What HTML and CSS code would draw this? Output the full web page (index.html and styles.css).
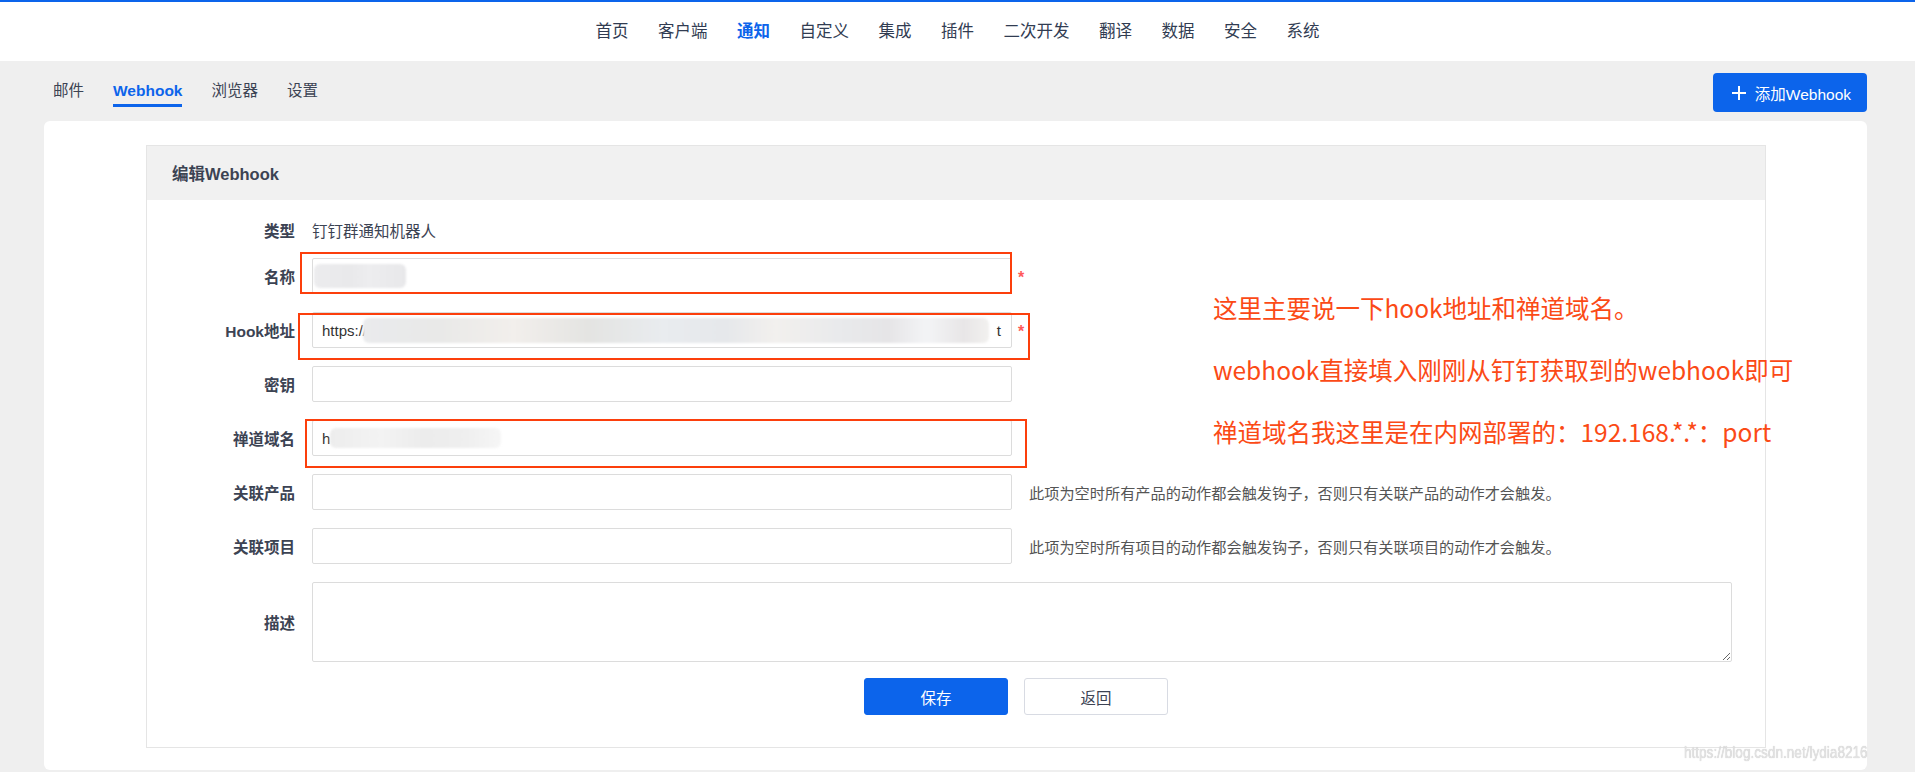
FILE: index.html
```html
<!DOCTYPE html>
<html lang="zh-CN">
<head>
<meta charset="utf-8">
<title>编辑Webhook</title>
<link rel="stylesheet" href="styles.css">
</head>
<body>
<header class="topbar">
  <nav class="mainnav">
    <a class="nav-item">首页</a>
    <a class="nav-item">客户端</a>
    <a class="nav-item active">通知</a>
    <a class="nav-item">自定义</a>
    <a class="nav-item">集成</a>
    <a class="nav-item">插件</a>
    <a class="nav-item">二次开发</a>
    <a class="nav-item">翻译</a>
    <a class="nav-item">数据</a>
    <a class="nav-item">安全</a>
    <a class="nav-item">系统</a>
  </nav>
</header>

<main class="main">
  <div class="toolbar">
    <nav class="subnav">
      <a class="sub-item">邮件</a>
      <a class="sub-item active">Webhook</a>
      <a class="sub-item">浏览器</a>
      <a class="sub-item">设置</a>
    </nav>
    <button class="btn-add">
      <svg class="plus" width="14" height="14" viewBox="0 0 14 14"><path d="M7 0v14M0 7h14" stroke="#fff" stroke-width="2"/></svg>
      <span>添加Webhook</span>
    </button>
  </div>

  <section class="card">
    <div class="panel">
      <div class="panel-head">编辑Webhook</div>
      <form class="form">
        <div class="row row-type">
          <label class="label">类型</label>
          <div class="static">钉钉群通知机器人</div>
        </div>
        <div class="row">
          <label class="label">名称</label>
          <div class="field"><span class="blur blur-name"></span></div>
          <span class="req">*</span>
        </div>
        <div class="row">
          <label class="label">Hook地址</label>
          <div class="field"><span class="val">https://</span><span class="blur blur-hook"></span><span class="val cursor">t</span></div>
          <span class="req">*</span>
        </div>
        <div class="row">
          <label class="label">密钥</label>
          <input class="field" type="text">
        </div>
        <div class="row">
          <label class="label">禅道域名</label>
          <div class="field"><span class="val">h</span><span class="blur blur-domain"></span></div>
        </div>
        <div class="row">
          <label class="label">关联产品</label>
          <input class="field" type="text">
          <span class="help">此项为空时所有产品的动作都会触发钩子，否则只有关联产品的动作才会触发。</span>
        </div>
        <div class="row">
          <label class="label">关联项目</label>
          <input class="field" type="text">
          <span class="help">此项为空时所有项目的动作都会触发钩子，否则只有关联项目的动作才会触发。</span>
        </div>
        <div class="row row-desc">
          <label class="label">描述</label>
          <textarea class="textarea"></textarea>
        </div>
        <div class="actions">
          <button type="button" class="btn btn-primary">保存</button>
          <button type="button" class="btn btn-default">返回</button>
        </div>
      </form>
    </div>
  </section>
</main>

<div class="mark mark-name"></div>
<div class="mark mark-hook"></div>
<div class="mark mark-domain"></div>

<div class="note">
  <p>这里主要说一下hook地址和禅道域名。</p>
  <p>webhook直接填入刚刚从钉钉获取到的webhook即可</p>
  <p>禅道域名我这里是在内网部署的：192.168.*.*：port</p>
</div>

<div class="watermark">https://blog.csdn.net/lydia8216</div>
</body>
</html>
```

FILE: styles.css
```css
* { box-sizing: border-box; }

html, body {
  margin: 0;
  padding: 0;
}

body {
  position: relative;
  width: 1915px;
  height: 772px;
  overflow: hidden;
  background: #efefef;
  font-family: "Liberation Sans", "Noto Sans CJK SC", sans-serif;
  color: #3c4353;
}

/* top bar */
.topbar {
  height: 61px;
  background: #fff;
  border-top: 2px solid #0c64eb;
  display: flex;
  align-items: center;
  justify-content: center;
  padding-bottom: 1px;
}

.mainnav {
  display: flex;
  gap: 29.5px;
}

.nav-item {
  font-size: 16.5px;
  line-height: 22px;
  color: #313c52;
}

.nav-item.active {
  color: #0c64eb;
  font-weight: bold;
}

/* main */
.main {
  margin: 0 48px 0 44px;
}

.toolbar {
  height: 60px;
  display: flex;
  align-items: center;
  justify-content: space-between;
  padding-left: 9px;
}

.subnav {
  display: flex;
  gap: 29px;
  align-self: stretch;
  align-items: center;
}

.sub-item {
  font-size: 15.5px;
  line-height: 22px;
  padding-top: 4px;
  padding-bottom: 2px;
  border-bottom: 3px solid transparent;
  color: #3c4353;
}

.sub-item.active {
  color: #0c64eb;
  font-weight: bold;
  border-bottom-color: #0c64eb;
}

.btn-add {
  height: 39px;
  margin-top: 3px;
  display: flex;
  align-items: center;
  gap: 9px;
  padding: 0 16px 0 19px;
  border: none;
  border-radius: 4px;
  background: #0c64eb;
  color: #fff;
  font-family: inherit;
  font-size: 15.5px;
}

.plus { display: block; }

/* card */
.card {
  background: #fff;
  border-radius: 6px;
  height: 649px;
  padding: 24px 101px 22px 102px;
}

.panel {
  border: 1px solid #e5e5e5;
}

.panel-head {
  height: 54px;
  background: #f1f1f1;
  display: flex;
  align-items: center;
  padding-left: 25px;
  font-size: 16.5px;
  font-weight: bold;
  color: #3c4353;
}

.form {
  padding: 12px 0 32px 0;
}

.row {
  display: flex;
  align-items: center;
  height: 36px;
  margin-bottom: 18px;
}

.row-type {
  margin-bottom: 10px;
}

.label {
  width: 148px;
  flex: none;
  text-align: right;
  margin-right: 17px;
  font-size: 15.5px;
  font-weight: bold;
  color: #3c4353;
}

.static {
  font-size: 15.5px;
  color: #3c4353;
}

.field {
  width: 700px;
  height: 36px;
  flex: none;
  border: 1px solid #dcdcdc;
  border-radius: 2px;
  background: #fff;
  display: flex;
  align-items: center;
  padding: 0 9px;
  font-family: inherit;
  font-size: 15px;
  color: #333;
  outline: none;
}

.val {
  font-size: 15px;
  color: #333;
  white-space: pre;
}

.cursor {
  margin-left: auto;
  padding-right: 1px;
}

.blur {
  display: inline-block;
  border-radius: 6px;
  filter: blur(1.2px);
}

.blur-name {
  width: 92px;
  height: 24px;
  margin-left: -8px;
  background: linear-gradient(90deg, #ececee 0%, #e9e9eb 40%, #ededef 60%, #e8e8ea 100%);
}

.blur-hook {
  width: 626px;
  height: 25px;
  margin-left: -4px;
  background: linear-gradient(90deg, #eaebed 0%, #e9e9e8 12%, #f2efec 24%, #e4e4e2 36%, #e9ecef 48%, #e6e8eb 58%, #f2f0ee 66%, #e9eaec 76%, #e6e5e7 84%, #f3f4f6 90%, #e8e6e7 96%, #f2f1ef 100%);
}

.blur-domain {
  width: 171px;
  height: 20px;
  margin-left: 0;
  background: linear-gradient(90deg, #ededed 0%, #f3f3f3 30%, #ececec 55%, #efefef 80%, #f6f6f6 100%);
}

.req {
  margin-left: 6px;
  color: #ff5a5a;
  font-size: 16px;
  font-weight: bold;
  line-height: 1;
  padding-top: 4px;
}

.help {
  margin-left: 17px;
  font-size: 15.2px;
  color: #555;
  white-space: nowrap;
}

.row-desc {
  height: 80px;
  margin-bottom: 16px;
  align-items: center;
}

.textarea {
  flex: 1;
  height: 80px;
  margin-right: 33px;
  border: 1px solid #dcdcdc;
  border-radius: 2px;
  resize: vertical;
  font-family: inherit;
  font-size: 15px;
  outline: none;
}

.actions {
  display: flex;
  justify-content: center;
  gap: 16px;
  padding-left: 165px;
  padding-right: 45px;
}

.btn {
  width: 144px;
  height: 37px;
  border-radius: 3px;
  font-family: inherit;
  font-size: 15.5px;
}

.btn-primary {
  background: #0c64eb;
  border: 1px solid #0c64eb;
  color: #fff;
}

.btn-default {
  background: #fff;
  border: 1px solid #d8dbe3;
  color: #3c4353;
}

/* annotation overlays */
.mark {
  position: absolute;
  border: 2px solid #fc3f0c;
}

.mark-name { left: 300px; top: 252px; width: 712px; height: 42px; }
.mark-hook { left: 298px; top: 313px; width: 732px; height: 47px; }
.mark-domain { left: 305px; top: 419px; width: 722px; height: 49px; }

.note {
  position: absolute;
  left: 1213px;
  top: 277px;
  font-family: "Noto Sans CJK SC", sans-serif;
  font-size: 24.5px;
  line-height: 62px;
  color: #fb4a16;
}

.note p { margin: 0; white-space: nowrap; }

.watermark {
  position: absolute;
  right: 47px;
  bottom: 9px;
  font-family: "Liberation Sans", sans-serif;
  font-size: 17px;
  color: #e2e2e2;
  text-shadow: 0 0 1px #bdbdbd;
  transform: scaleX(0.8);
  transform-origin: right center;
  white-space: nowrap;
}
```
